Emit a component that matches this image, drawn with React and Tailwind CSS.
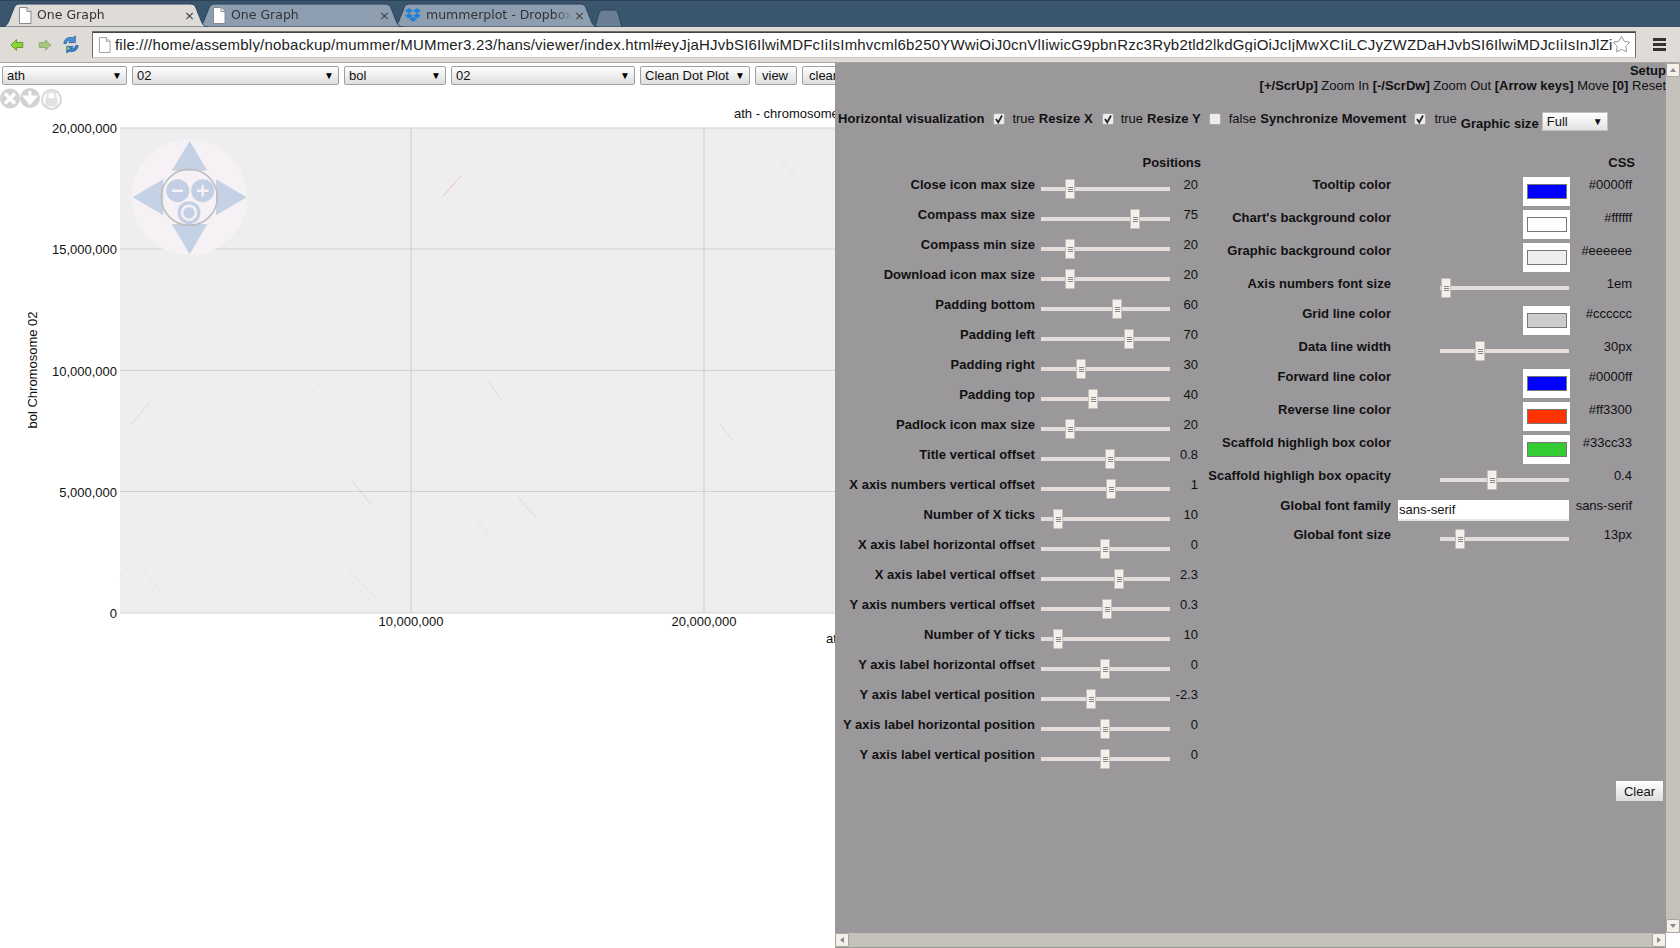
import React from 'react';
import { FaDropbox } from 'react-icons/fa';
import { Star } from 'lucide-react';

const leftRows = [
  ['Close icon max size', 29, '20'],
  ['Compass max size', 94, '75'],
  ['Compass min size', 29, '20'],
  ['Download icon max size', 29, '20'],
  ['Padding bottom', 76, '60'],
  ['Padding left', 88, '70'],
  ['Padding right', 40, '30'],
  ['Padding top', 52, '40'],
  ['Padlock icon max size', 29, '20'],
  ['Title vertical offset', 69, '0.8'],
  ['X axis numbers vertical offset', 70, '1'],
  ['Number of X ticks', 17, '10'],
  ['X axis label horizontal offset', 64, '0'],
  ['X axis label vertical offset', 78, '2.3'],
  ['Y axis numbers vertical offset', 66, '0.3'],
  ['Number of Y ticks', 17, '10'],
  ['Y axis label horizontal offset', 64, '0'],
  ['Y axis label vertical position', 50, '-2.3'],
  ['Y axis label horizontal position', 64, '0'],
  ['Y axis label vertical position', 64, '0'],
];

const rightRows = [
  { label: 'Tooltip color', color: 'bg-[#0000ff]', value: '#0000ff' },
  { label: "Chart's background color", color: 'bg-[#ffffff]', value: '#ffffff' },
  { label: 'Graphic background color', color: 'bg-[#eeeeee]', value: '#eeeeee' },
  { label: 'Axis numbers font size', thumb: 6, value: '1em' },
  { label: 'Grid line color', color: 'bg-[#cccccc]', value: '#cccccc' },
  { label: 'Data line width', thumb: 40, value: '30px' },
  { label: 'Forward line color', color: 'bg-[#0000ff]', value: '#0000ff' },
  { label: 'Reverse line color', color: 'bg-[#ff3300]', value: '#ff3300' },
  { label: 'Scaffold highligh box color', color: 'bg-[#33cc33]', value: '#33cc33' },
  { label: 'Scaffold highligh box opacity', thumb: 52, value: '0.4' },
  { label: 'Global font family', input: 'sans-serif', value: 'sans-serif' },
  { label: 'Global font size', thumb: 20, value: '13px' },
];

// faint alignment segments on the plot
const dots = [
  ['#ff3300', 443, 196, 461, 176, 0.25],
  ['#ff3300', 131, 424, 150, 402, 0.14],
  ['#0000ff', 352, 481, 371, 504, 0.12],
  ['#0000ff', 518, 497, 536, 518, 0.1],
  ['#0000ff', 487, 380, 503, 402, 0.08],
  ['#ff3300', 306, 400, 322, 380, 0.06],
  ['#ff3300', 230, 380, 246, 400, 0.05],
  ['#0000ff', 474, 517, 492, 538, 0.06],
  ['#0000ff', 348, 570, 378, 600, 0.05],
  ['#ff3300', 120, 578, 132, 562, 0.06],
  ['#0000ff', 140, 567, 165, 596, 0.05],
  ['#33cc33', 360, 448, 373, 422, 0.04],
  ['#ff3300', 637, 490, 654, 468, 0.05],
  ['#0000ff', 720, 424, 734, 442, 0.08],
  ['#0000ff', 781, 160, 795, 175, 0.06],
  ['#ff3300', 250, 520, 262, 500, 0.05],
];

function tabPath(w, h) {
  return `M0 ${h} C4 ${h} 6 ${h - 3} 8 ${h - 9} L12 5 C13 2 15 1 18 1 H${w - 18} C${w - 15} 1 ${w - 13} 2 ${w - 12} 5 L${w - 8} ${h - 9} C${w - 6} ${h - 3} ${w - 4} ${h} ${w} ${h} Z`;
}

function DocIcon() {
  return (
    <svg width="14" height="17" viewBox="0 0 14 17" className="shrink-0">
      <path d="M1.5 .5H9L13 4.5V16.5H1.5Z" fill="#fff" stroke="#8a8a8a" />
      <path d="M9 .5V4.5H13" fill="#eee" stroke="#8a8a8a" />
    </svg>
  );
}

function Tab({ active, icon, title, className, pad }) {
  return (
    <div className={`relative h-[24px] w-[206px] shrink-0 ${className}`}>
      <svg width="206" height="24" className="absolute inset-0">
        <path d={tabPath(206, 24)} fill={active ? '#dfdcd8' : '#8d9eb0'} stroke="#2e4257" />
      </svg>
      <div className={`relative flex h-full items-center pr-[13px] font-['DejaVu_Sans',sans-serif] text-[12.5px] text-[#333] ${pad}`}>
        {icon}
        <span className="ml-[5px] w-[146px] overflow-hidden whitespace-nowrap [mask-image:linear-gradient(to_right,black_88%,transparent)]">{title}</span>
        <span className="ml-auto text-[13px] leading-none text-[#444]">×</span>
      </div>
    </div>
  );
}

function NavIcons() {
  return (
    <div className="flex items-center pl-[10px]">
      <svg width="14" height="14" viewBox="0 0 17 16">
        <path d="M1 8L8 1.5V5H15.5V11H8V14.5Z" fill="#8fd43a" stroke="#4e8f1a" />
      </svg>
      <svg width="14" height="14" viewBox="0 0 17 16" className="ml-[14px]">
        <path d="M15.5 8L9 1.5V5H1.5V11H9V14.5Z" fill="#a5c77a" stroke="#6b8a55" strokeDasharray="1.5 1" />
      </svg>
      <svg width="18" height="19" viewBox="0 0 19 20" className="ml-[10px]">
        <path d="M2 9C2 4 7 1.5 11.5 3L14 1V8H7L9.5 5.8C7 5 4.5 6.5 4.5 9Z" fill="#4a90d9" stroke="#1f5a9e" strokeWidth=".8" />
        <path d="M17 11C17 16 12 18.5 7.500 17L5 19V12H12L9.500 14.200C12 15 14.500 13.500 14.500 11Z" fill="#3d7fc9" stroke="#1f5a9e" strokeWidth=".8" />
        <path d="M5 14H8" stroke="#9bd24a" strokeWidth="2" />
      </svg>
    </div>
  );
}

function Chrome() {
  return (
    <div className="h-[63px] shrink-0">
      <div className="flex h-[27px] items-end overflow-hidden border-t border-[#2e4257] bg-[#3a566f] pl-[2px]">
        <Tab active title="One Graph" icon={<DocIcon />} pad="pl-[16px]" className="z-10" />
        <Tab title="One Graph" icon={<DocIcon />} pad="pl-[15px]" className="z-[5] -ml-[11px]" />
        <Tab title="mummerplot - Dropbox" icon={<FaDropbox className="shrink-0 text-[16px] text-[#1f7fd6]" />} pad="pl-[13px]" className="-ml-[11px]" />
        <svg width="28" height="18" viewBox="0 0 28 18" className="-ml-[3px]">
          <path d="M0 18L4 4C5 2 6 1 8 1H19C21 1 22 2 23 4L27 18Z" fill="#6a7f94" stroke="#2e4257" />
        </svg>
      </div>
      <div className="flex h-[36px] items-center border-b border-[#a9a6a2] bg-[#dfdcd8]">
        <NavIcons />
        <div className="ml-[12px] flex h-[27px] w-[1544px] items-center overflow-hidden border border-[#6f6d6a] border-b-[#c9c6c2] bg-white pl-[5px] pr-[24px] shadow-[inset_0_1px_0_#444]">
          <svg width="13" height="16" viewBox="0 0 14 17" className="shrink-0">
            <path d="M1.500 .5H9L13 4.500V16.500H1.500Z" fill="#fff" stroke="#999" />
            <path d="M9 .5V4.500H13" fill="#eee" stroke="#999" />
          </svg>
          <span className="ml-[4px] overflow-hidden whitespace-nowrap text-[15px] leading-none tracking-[0.2px] text-[#222]">
            file:///home/assembly/nobackup/mummer/MUMmer3.23/hans/viewer/index.html#eyJjaHJvbSI6IlwiMDFcIiIsImhvcml6b250YWwiOiJ0cnVlIiwicG9pbnRzc3Ryb2tld2lkdGgiOiJcIjMwXCIiLCJyZWZDaHJvbSI6IlwiMDJcIiIsInJlZiI6
          </span>
          <Star size={19} strokeWidth={1} className="ml-auto -mr-[20px] shrink-0 text-[#777]" />
        </div>
        <div className="ml-[17px] flex flex-col gap-[2px]">
          <div className="h-[3px] w-[13px] bg-[#333]" />
          <div className="h-[3px] w-[13px] bg-[#333]" />
          <div className="h-[3px] w-[13px] bg-[#333]" />
        </div>
      </div>
    </div>
  );
}

function FakeSelect({ label, className }) {
  return (
    <div className={`flex h-[19px] shrink-0 items-center justify-between rounded-[2px] border border-[#a0a0a0] bg-gradient-to-b from-white to-[#dedede] pl-[4px] pr-[4px] text-[13px] leading-none text-[#111] ${className}`}>
      <span>{label}</span>
      <span className="text-[10px] text-black">▼</span>
    </div>
  );
}

function FakeButton({ label, className }) {
  return (
    <div className={`flex h-[19px] shrink-0 items-center rounded-[2px] border border-[#a0a0a0] bg-gradient-to-b from-white to-[#dedede] px-[6px] text-[13px] leading-none text-[#111] ${className}`}>
      {label}
    </div>
  );
}

function Chart() {
  const hl = [128, 249, 370.5, 491.5, 613];
  const ticks = ['20,000,000', '15,000,000', '10,000,000', '5,000,000', '0'];
  const textProps = { fontSize: 13, fill: '#111' };
  return (
    <svg width="835" height="860" viewBox="0 88 835 860" className="block shrink-0 font-['Liberation_Sans',sans-serif]">
      {/* close / download / lock icons */}
      <circle cx="10" cy="98.500" r="10" fill="#d2d2d2" />
      <path d="M5 93.500L15 103.500M15 93.500L5 103.500" stroke="#fff" strokeWidth="3.500" />
      <circle cx="30" cy="98" r="10" fill="#d2d2d2" />
      <path d="M30 91V101M25 97L30 103L35 97Z" stroke="#fff" strokeWidth="3" fill="#fff" />
      <circle cx="51.500" cy="99.500" r="9.500" fill="none" stroke="#d8d8d8" strokeWidth="2" />
      <rect x="45.500" y="98" width="12" height="8.500" fill="#e2e2e2" />
      <path d="M47.500 98V95.500C47.500 90.500 55.500 90.500 55.500 95.500V98" fill="none" stroke="#e2e2e2" strokeWidth="2" />

      <text x="734" y="118" {...textProps}>ath - chromosome 02</text>

      <rect x="120" y="128" width="715" height="485" fill="#eeeeee" />
      {hl.map((y) => (
        <line key={y} x1="120" x2="835" y1={y} y2={y} stroke="#d2d2d2" strokeWidth="1" />
      ))}
      <line x1="411" x2="411" y1="128" y2="613" stroke="#cccccc" />
      <line x1="704" x2="704" y1="128" y2="613" stroke="#cccccc" />
      {dots.map(([c, x1, y1, x2, y2, o], i) => (
        <line key={i} x1={x1} y1={y1} x2={x2} y2={y2} stroke={c} strokeOpacity={o} strokeWidth="1" />
      ))}

      {hl.map((y, i) => (
        <text key={y} x="117" y={y + 5} textAnchor="end" {...textProps}>{ticks[i]}</text>
      ))}
      <text x="411" y="626" textAnchor="middle" {...textProps}>10,000,000</text>
      <text x="704" y="626" textAnchor="middle" {...textProps}>20,000,000</text>
      <text x="826" y="643" {...textProps}>ath Chromosome 02</text>
      <text x="37" y="370" textAnchor="middle" transform="rotate(-90 37 370)" {...textProps}>bol Chromosome 02</text>

      {/* compass */}
      <circle cx="189.300" cy="197.300" r="58" fill="#f5f1f5" />
      <g fill="#c5d2e6">
        <path d="M189.700 141L171.700 170.700H207.300Z" />
        <path d="M132.700 197.300L163.300 179.300V215.300Z" />
        <path d="M246.700 197.300L216 179.300V215.300Z" />
        <path d="M189.700 254.300L171.700 224H207.300Z" />
      </g>
      <circle cx="189.300" cy="197.300" r="28" fill="none" stroke="#bcbcbc" strokeWidth="1.500" />
      <g fill="#c3cfe5">
        <circle cx="177.700" cy="190.700" r="11.500" />
        <circle cx="202.700" cy="190.700" r="11.500" />
        <circle cx="189" cy="212.700" r="11.500" />
      </g>
      <path d="M172 190.700H183M197 190.700H208.500M202.700 185V196.500" stroke="#f5f1f5" strokeWidth="2.500" />
      <circle cx="189" cy="212.700" r="7" fill="none" stroke="#f5f1f5" strokeWidth="2.500" />
    </svg>
  );
}

function Slider({ thumb, className }) {
  return (
    <div className={`relative mt-[10px] h-[4px] w-[129px] shrink-0 bg-[#e6dedc] ${className}`}>
      <div
        className="absolute top-[-8px] flex h-[20px] w-[10px] -translate-x-1/2 flex-col items-center justify-center gap-[1px] rounded-[1px] border border-[#c9bdb6] bg-[#f3efec]"
        style={{ left: thumb }}
      >
        <div className="h-px w-[5px] bg-[#8d8580]" />
        <div className="h-px w-[5px] bg-[#8d8580]" />
        <div className="h-px w-[5px] bg-[#8d8580]" />
      </div>
    </div>
  );
}

function Check({ checked }) {
  return (
    <div className="flex h-[12px] w-[12px] shrink-0 items-center justify-center rounded-[2px] border border-[#a9a7a8] bg-[#ececec]">
      {checked && (
        <svg width="10" height="10" viewBox="0 0 10 10">
          <path d="M2 5L4.200 8.500L8 1.500" fill="none" stroke="#222" strokeWidth="1.700" />
        </svg>
      )}
    </div>
  );
}

function OptionsRow() {
  const opts = [
    ['Horizontal visualization', true, 'true', 'ml-[9px]', 'ml-[7px]'],
    ['Resize X', true, 'true', 'ml-[9px]', 'ml-[7px]'],
    ['Resize Y', false, 'false', 'ml-[8px]', 'ml-[8px]'],
    ['Synchronize Movement', true, 'true', 'ml-[8px]', 'ml-[8px]'],
  ];
  return (
    <div className="mt-[17px] flex h-[28px] items-start pl-[3px] pt-[1px]">
      {opts.map(([label, on, val, cbm, vm]) => (
        <div key={label} className="mr-[4px] flex h-[15px] items-center whitespace-nowrap">
          <b className="tracking-[0.05px]">{label}</b>
          <div className={cbm}><Check checked={on} /></div>
          <span className={vm}>{val}</span>
        </div>
      ))}
      <b className="mt-[5px] whitespace-nowrap tracking-[0.05px]">Graphic size</b>
      <div className="ml-[3px] mt-[1px] flex h-[19px] w-[66px] items-center justify-between border border-[#c0c0c0] bg-gradient-to-b from-white to-[#e2e2e2] px-[4px] text-[13px] text-[#111]">
        <span>Full</span>
        <span className="text-[10px]">▼</span>
      </div>
    </div>
  );
}

function LeftTable() {
  return (
    <div className="w-[366px] shrink-0">
      <div className="h-[22px] text-right font-bold">Positions</div>
      {leftRows.map(([label, thumb, value], i) => (
        <div key={i} className="flex h-[30px]">
          <div className="w-[200px] shrink-0 whitespace-nowrap text-right font-bold tracking-[0.05px]">{label}</div>
          <Slider thumb={thumb} className="ml-[6px]" />
          <div className="w-[28px] shrink-0 text-right">{value}</div>
        </div>
      ))}
    </div>
  );
}

function RightTable() {
  return (
    <div className="w-[434px] shrink-0">
      <div className="h-[22px] text-right font-bold">CSS</div>
      {rightRows.map((r) => {
        const h = r.color ? 'h-[33px]' : r.input ? 'h-[29px]' : 'h-[30px]';
        return (
          <div key={r.label} className={`flex ${h}`}>
            <div className="w-[190px] shrink-0 whitespace-nowrap text-right font-bold tracking-[0.05px]">{r.label}</div>
            <div className="w-[178px] shrink-0">
              {r.thumb !== undefined && <Slider thumb={r.thumb} className="ml-[49px]" />}
              {r.color && (
                <div className="ml-[132px] flex h-[29px] w-[47px] items-center justify-center bg-white">
                  <div className={`h-[15px] w-[40px] border border-[#777] ${r.color}`} />
                </div>
              )}
              {r.input && (
                <div className="ml-[7px] mt-[2px] flex h-[21px] w-[171px] items-center border-b-2 border-[#e6e6e6] bg-white pl-[1px] text-[#111]">
                  {r.input}
                </div>
              )}
            </div>
            <div className="w-[63px] shrink-0 text-right">{r.value}</div>
          </div>
        );
      })}
    </div>
  );
}

function ScrollBtn({ d, className }) {
  return (
    <div className={`flex h-[14px] w-[14px] shrink-0 items-center justify-center rounded-[2px] border border-[#a9a59e] bg-[#f6f0ea] ${className}`}>
      <svg width="8" height="8" viewBox="0 0 8 8"><path d={d} fill="#8a8a8a" /></svg>
    </div>
  );
}

function Panel() {
  return (
    <div className="flex h-[885px] w-[845px] shrink-0 flex-col text-[13px] leading-[15px] text-[#111]">
      <div className="flex min-h-0 flex-1">
        <div className="w-[831px] shrink-0 bg-[#9a989b]">
          <div className="text-right font-bold">Setup</div>
          <div className="whitespace-nowrap text-right">
            <b>[+/ScrUp]</b> Zoom In <b>[-/ScrDw]</b> Zoom Out <b>[Arrow keys]</b> Move <b>[0]</b> Reset
          </div>
          <OptionsRow />
          <div className="mt-[17px] flex">
            <LeftTable />
            <RightTable />
          </div>
          <div className="mt-[4px] flex justify-end pr-[3px]">
            <div className="flex h-[20px] w-[47px] items-center justify-center bg-gradient-to-b from-white to-[#dcdcdc] text-[#111]">Clear</div>
          </div>
        </div>
        <div className="flex w-[14px] shrink-0 flex-col justify-between bg-[#c4c1ba]">
          <ScrollBtn d="M4 2L7 6H1Z" />
          <ScrollBtn d="M4 6L1 2H7Z" />
        </div>
      </div>
      <div className="flex h-[15px] shrink-0 bg-white">
        <div className="flex w-[831px] justify-between border-b border-[#999] bg-[#c4c1ba]">
          <ScrollBtn d="M2 4L6 1V7Z" />
          <ScrollBtn d="M6 4L2 1V7Z" />
        </div>
      </div>
    </div>
  );
}

export default function App() {
  return (
    <div className="flex h-[948px] w-[1680px] flex-col overflow-hidden bg-white font-['Liberation_Sans',sans-serif]">
      <Chrome />
      <div className="flex min-h-0 flex-1">
        <div className="w-[835px] shrink-0 overflow-hidden">
          <div className="flex h-[25px] gap-[5px] overflow-hidden pl-[2px] pt-[3px]">
            <FakeSelect label="ath" className="w-[125px]" />
            <FakeSelect label="02" className="w-[207px]" />
            <FakeSelect label="bol" className="w-[102px]" />
            <FakeSelect label="02" className="w-[184px]" />
            <FakeSelect label="Clean Dot Plot" className="w-[110px]" />
            <FakeButton label="view" className="w-[42px]" />
            <FakeButton label="clear" className="w-[50px]" />
          </div>
          <Chart />
        </div>
        <Panel />
      </div>
    </div>
  );
}
